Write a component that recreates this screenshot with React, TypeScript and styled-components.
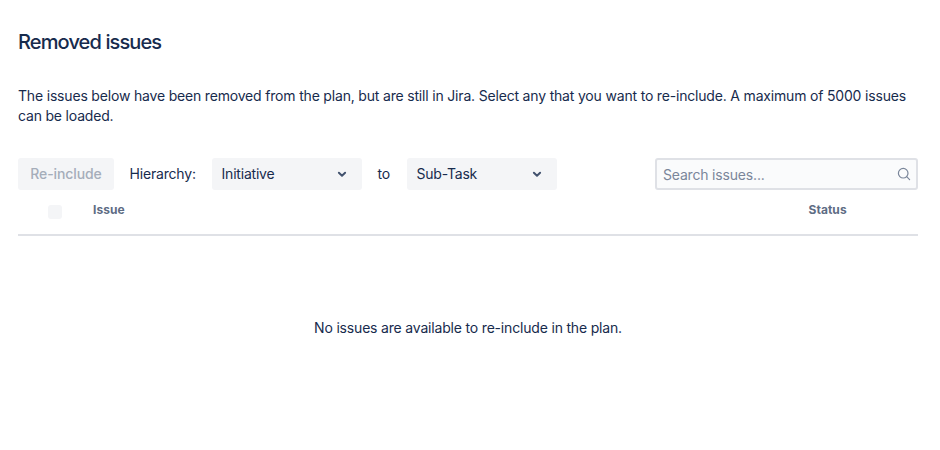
import React from "react";
import styled, { createGlobalStyle } from "styled-components";

const Global = createGlobalStyle`
  * { box-sizing: border-box; }
  body {
    margin: 0; background: #fff; color: #172b4d;
    font: 14px/20px Inter, sans-serif; letter-spacing: -0.182px;
  }
`;
const Page = styled.main`
  width: 940px; height: 450px; padding: 30px 22px 0 18px; display: flex; flex-direction: column;
`;
const Title = styled.h1`
  margin: 0; font-size: 20px; line-height: 24px; font-weight: 500; letter-spacing: -0.88px; white-space: nowrap;
`;
const Intro = styled.p` margin: 32px 0 32px; `;
const Toolbar = styled.div` display: flex; height: 32px; align-items: center; `;
const Action = styled.button`
  width: 96px; height: 32px; border: 0; border-radius: 3px; background: #f4f5f7; color: #a5adba;
  font: 500 14px/20px Inter, sans-serif; letter-spacing: -0.1px; padding: 0; white-space: nowrap;
`;
const Label = styled.span<{ $width: number }>`
  width: ${(p) => p.$width}px; padding-left: 15.5px; white-space: nowrap;
`;
const Select = styled.div`
  display: flex; align-items: center; justify-content: space-between; width: 150px; height: 32px;
  padding: 0 14px 0 9.5px; border-radius: 3px; background: #f4f5f7; letter-spacing: -0.2px;
`;
const Search = styled.div`
  display: flex; align-items: center; justify-content: space-between; margin-left: auto; width: 263px; height: 32px;
  border: 2px solid #dfe1e6; border-radius: 3px; background: #fafbfc; padding: 2px 5px 0 6px; color: #7a869a;
`;
const SearchIcon = styled.svg` margin-top: -3px; `;
const Header = styled.div`
  display: flex; height: 46px; border-bottom: 2px solid #dfe1e6; color: #5e6c84;
  font-size: 12px; font-weight: 700; letter-spacing: 0.05px; padding: 10px 0 0 30px;
`;
const Check = styled.span` width: 14px; height: 14px; margin-top: 5px; border-radius: 3px; background: #f4f5f7; `;
const Issue = styled.span` width: 715.5px; margin-left: 31px; `;
const Empty = styled.p` margin: 82px 0 0; text-align: center; `;

const Chevron = () => (
  <svg width="12" height="8" viewBox="0 0 12 8" fill="none" stroke="#42526e" strokeWidth="2" strokeLinecap="round" strokeLinejoin="round">
    <path d="M2.9 2.8 6 5.7 9.1 2.8" />
  </svg>
);

export default function App() {
  return (
    <Page>
      <Global />
      <Title>Removed issues</Title>
      <Intro>
        The issues below have been removed from the plan, but are still in Jira. Select any that you want to re-include. A maximum of 5000 issues can be loaded.
      </Intro>
      <Toolbar>
        <Action disabled>Re-include</Action>
        <Label $width={98}>Hierarchy:</Label>
        <Select>Initiative<Chevron /></Select>
        <Label $width={45}>to</Label>
        <Select>Sub-Task<Chevron /></Select>
        <Search>
          Search issues...
          <SearchIcon width="14" height="14" viewBox="0 0 14 14" fill="none" stroke="#7a869a" strokeWidth="1.2" strokeLinecap="round">
            <circle cx="6.2" cy="6.2" r="4.8" />
            <path d="m9.7 9.7 2.9 2.9" />
          </SearchIcon>
        </Search>
      </Toolbar>
      <Header><Check /><Issue>Issue</Issue><span>Status</span></Header>
      <Empty>No issues are available to re-include in the plan.</Empty>
    </Page>
  );
}
